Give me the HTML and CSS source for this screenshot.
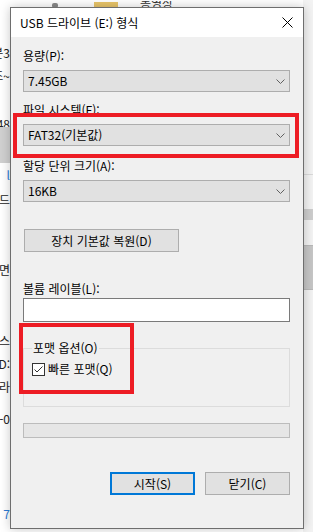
FILE: index.html
```html
<!DOCTYPE html>
<html lang="ko">
<head>
  <meta charset="UTF-8">
  <title>USB 드라이브 (E:) 형식</title>
  <link rel="stylesheet" href="styles.css">
</head>
<body>
  <!-- Explorer window behind the dialog -->
  <div class="explorer">
    <div class="top-strip">
      <span class="pin"></span>
      <span class="folder"></span>
      <span class="top-text">동영상</span>
    </div>
    <div class="side">
      <div class="row r1">구분3</div>
      <div class="row r2">조~</div>
      <div class="row r3">48</div>
      <div class="row sel"></div>
      <div class="row blue r4">l</div>
      <div class="row r5">드</div>
      <div class="row r6">면</div>
      <div class="row r7">스</div>
      <div class="row r8">D:</div>
      <div class="row r9">라</div>
      <div class="row r10">-0</div>
      <div class="row blue r11">7</div>
    </div>
    <div class="right-rows">
      <div class="line l1"></div>
      <div class="band b1"></div>
      <div class="band b2"></div>
    </div>
  </div>

  <!-- Format dialog -->
  <div class="dialog">
    <div class="titlebar">
      <span class="title">USB 드라이브 (E:) 형식</span>
      <svg class="close" width="11" height="11" viewBox="0 0 11 11">
        <path d="M0.5 0.5 L10.5 10.5 M10.5 0.5 L0.5 10.5" stroke="#000" stroke-width="1" fill="none"/>
      </svg>
    </div>

    <div class="content">
      <label class="label l-cap">용량(P):</label>
      <div class="combo">
        <span>7.45GB</span>
        <svg class="chev" width="9" height="5" viewBox="0 0 9 5"><path d="M0.5 0.5 L4.5 4.5 L8.5 0.5" stroke="#606060" fill="none"/></svg>
      </div>

      <label class="label l-fs">파일 시스템(F):</label>
      <div class="combo">
        <span>FAT32(기본값)</span>
        <svg class="chev" width="9" height="5" viewBox="0 0 9 5"><path d="M0.5 0.5 L4.5 4.5 L8.5 0.5" stroke="#606060" fill="none"/></svg>
      </div>

      <label class="label l-unit">할당 단위 크기(A):</label>
      <div class="combo">
        <span>16KB</span>
        <svg class="chev" width="9" height="5" viewBox="0 0 9 5"><path d="M0.5 0.5 L4.5 4.5 L8.5 0.5" stroke="#606060" fill="none"/></svg>
      </div>

      <button class="btn restore-btn">장치 기본값 복원(D)</button>

      <label class="label l-vol">볼륨 레이블(L):</label>
      <div class="textbox"></div>

      <fieldset class="group">
        <legend>포맷 옵션(O)</legend>
        <div class="check-row">
          <svg class="checkbox" width="13" height="13" viewBox="0 0 13 13">
            <rect x="0.5" y="0.5" width="12" height="12" fill="#fff" stroke="#333"/>
            <path d="M2.5 6.5 L5 9 L10.5 3.5" stroke="#333" stroke-width="1" fill="none"/>
          </svg>
          <span>빠른 포맷(Q)</span>
        </div>
      </fieldset>

      <div class="progress"></div>

      <div class="actions">
        <button class="btn start-btn">시작(S)</button>
        <button class="btn close-btn">닫기(C)</button>
      </div>
    </div>

    <!-- Red annotation boxes -->
    <div class="mark mark-fs"></div>
    <div class="mark mark-opt"></div>
  </div>
</body>
</html>
```

FILE: styles.css
```css
* {
  box-sizing: border-box;
  margin: 0;
  padding: 0;
}
body {
  width: 313px;
  height: 532px;
  overflow: hidden;
  position: relative;
  background-color: #fff;
  font-family: "Noto Sans CJK KR", "Noto Sans", sans-serif;
  font-size: 12px;
  color: #000;
}

/* Background explorer window */
.explorer {
  width: 100%;
  height: 100%;
  display: flex;
  flex-direction: column;
}
.top-strip {
  height: 8px;
  display: flex;
  align-items: flex-end;
  background-color: #fff;
}
.pin {
  width: 6px;
  height: 5px;
  margin-left: 52px;
  background-color: #8a8a8a;
  border-radius: 2px;
}
.folder {
  width: 24px;
  height: 6px;
  margin-left: 36px;
  background-color: #e9c56a;
}
.top-text {
  margin-left: 22px;
  line-height: 4px;
  height: 7px;
  overflow: hidden;
  font-size: 12px;
  color: #333;
}
.side {
  width: 10px;
  display: flex;
  flex-direction: column;
  overflow: hidden;
}
.row {
  height: 23px;
  line-height: 23px;
  white-space: nowrap;
  display: flex;
  justify-content: flex-end;
  color: #222;
}
.r1 { margin-top: 33px; }
.r2 { height: 24px; }
.r3 { margin-top: 24px; }
.sel {
  height: 36px;
  margin-top: -8px;
  background-color: #d0d0d0;
}
.blue { color: #2b7bd6; }
.r5 { margin-top: 2px; }
.r6 { margin-top: 47px; }
.r7 { margin-top: 48px; }
.r10 { margin-top: 9px; }
.r11 { margin-top: 72px; }

.right-rows {
  position: absolute;
  right: 0;
  top: 0;
  width: 10px;
  height: 100%;
  display: flex;
  flex-direction: column;
  background-color: #f3f3f3;
}
.line {
  margin-top: 174px;
  height: 1px;
  background-color: #dadada;
}
.b1 {
  margin-top: 34px;
  height: 11px;
  background-color: #cdcdcd;
}
.b2 {
  margin-top: 25px;
  height: 45px;
  background-color: #c6c6c6;
  border-top: 1px solid #b8b8b8;
  border-bottom: 1px solid #b8b8b8;
}

/* Dialog window */
.dialog {
  position: absolute;
  left: 10px;
  top: 7px;
  width: 294px;
  height: 522px;
  background-color: #f0f0f0;
  border: 1px solid #6e6e6e;
  box-shadow: 0 0 10px rgba(0, 0, 0, 0.22);
}
.titlebar {
  height: 29px;
  background-color: #fff;
  display: flex;
  align-items: center;
  justify-content: space-between;
  padding: 0 10px 0 9px;
}
.title {
  font-size: 12px;
  line-height: 16px;
}
.close {
  display: block;
}

.content {
  display: flex;
  flex-direction: column;
  padding: 0 13px 0 12px;
}
.label {
  line-height: 16px;
  height: 16px;
}
.l-cap { margin-top: 11px; }
.l-fs { margin-top: 10px; }
.l-unit { margin-top: 12px; }
.l-vol { margin-top: 29px; }

.combo {
  height: 22px;
  margin-top: 6px;
  background-color: #e1e1e1;
  border: 1px solid #adadad;
  display: flex;
  align-items: center;
  justify-content: space-between;
  padding: 0 4px 0 4px;
  line-height: 16px;
}
.chev {
  display: block;
}

.btn {
  font-family: inherit;
  font-size: 12px;
  color: #000;
  background-color: #e1e1e1;
  border: 1px solid #adadad;
  height: 23px;
  line-height: 16px;
}
.restore-btn {
  width: 155px;
  margin-top: 27px;
  margin-left: 1px;
}

.textbox {
  height: 24px;
  margin-top: 1px;
  background-color: #fff;
  border: 1px solid #7a7a7a;
}

.group {
  height: 67px;
  margin-top: 18px;
  border: 1px solid #dcdcdc;
  padding: 0 8px;
}
.group legend {
  padding: 0 1px;
  line-height: 16px;
  margin-left: 0;
}
.check-row {
  display: flex;
  align-items: center;
  gap: 3px;
  margin-top: 5px;
  line-height: 16px;
}
.checkbox {
  display: block;
}

.progress {
  height: 15px;
  margin-top: 16px;
  background-color: #e6e6e6;
  border: 1px solid #bcbcbc;
}

.actions {
  display: flex;
  justify-content: flex-end;
  gap: 10px;
  margin-top: 34px;
}
.start-btn,
.close-btn {
  width: 85px;
}
.start-btn {
  border: 2px solid #0078d7;
}

/* Red highlight boxes drawn over the dialog */
.mark {
  position: absolute;
  border: 4px solid #ed1c24;
}
.mark-fs {
  left: 2px;
  top: 105px;
  width: 286px;
  height: 45px;
}
.mark-opt {
  left: 8px;
  top: 315px;
  width: 115px;
  height: 71px;
}
```
